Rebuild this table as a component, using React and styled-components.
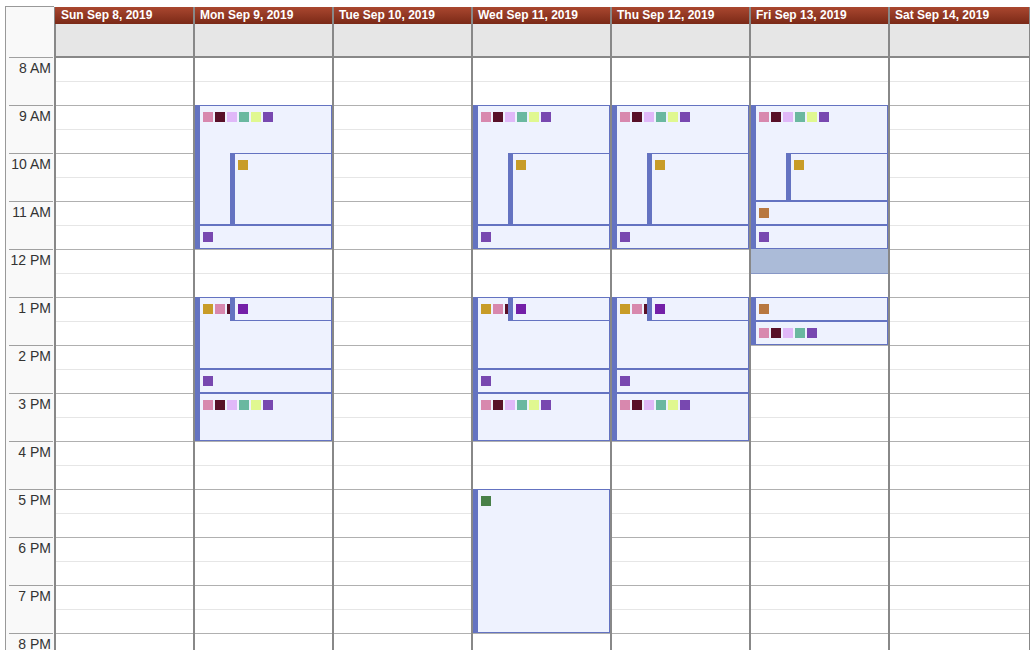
import styled, { createGlobalStyle } from "styled-components"

const GlobalStyle = createGlobalStyle`
  html, body {
    margin: 0;
    padding: 0;
    overflow: hidden;
    background: white;
  }
  body {
    font-family: "Liberation Sans", Arial, sans-serif;
  }
`

const HOUR = 48
const FIRST_HOUR = 8

const c = {
  pink: "#d888ae",
  maroon: "#581028",
  lav: "#e0b8f8",
  teal: "#6ab8a0",
  lime: "#e0f890",
  purple: "#7848b0",
  gold: "#c89c28",
  brown: "#b87840",
  violet: "#7420a8",
  green: "#488048",
}

const full = [c.pink, c.maroon, c.lav, c.teal, c.lime, c.purple]

const morning = [
  { start: 9, end: 11.5, tags: full },
  { start: 10, end: 11.5, tags: [c.gold], indent: true },
  { start: 11.5, end: 12, tags: [c.purple] },
]

const afternoon = [
  { start: 13, end: 14.5, tags: [c.gold, c.pink, c.maroon] },
  { start: 13, end: 13.5, tags: [c.violet], indent: true },
  { start: 14.5, end: 15, tags: [c.purple] },
  { start: 15, end: 16, tags: full },
]

const days = [
  { label: "Sun Sep 8, 2019", events: [] },
  { label: "Mon Sep 9, 2019", events: [...morning, ...afternoon] },
  { label: "Tue Sep 10, 2019", events: [] },
  {
    label: "Wed Sep 11, 2019",
    events: [...morning, ...afternoon, { start: 17, end: 20, tags: [c.green] }],
  },
  { label: "Thu Sep 12, 2019", events: [...morning, ...afternoon] },
  {
    label: "Fri Sep 13, 2019",
    events: [
      { start: 9, end: 11, tags: full },
      { start: 10, end: 11, tags: [c.gold], indent: true },
      { start: 11, end: 11.5, tags: [c.brown] },
      { start: 11.5, end: 12, tags: [c.purple] },
      { start: 13, end: 13.5, tags: [c.brown] },
      { start: 13.5, end: 14, tags: [c.pink, c.maroon, c.lav, c.teal, c.purple] },
    ],
    busy: [{ start: 12, end: 12.5 }],
  },
  { label: "Sat Sep 14, 2019", events: [] },
]

const hours = ["8 AM", "9 AM", "10 AM", "11 AM", "12 PM", "1 PM", "2 PM", "3 PM", "4 PM", "5 PM", "6 PM", "7 PM", "8 PM", "9 PM"]

const Page = styled.div`
  display: flex;
  align-items: flex-start;
  padding: 6px 0 0 5px;
`

const Gutter = styled.div`
  width: 48px;
  flex-shrink: 0;
  background: #f9f9f9;
  border-left: 1px solid #999;
  border-top: 1px solid #999;
`

const Corner = styled.div`
  height: 50px;
`

const HourLabel = styled.div`
  height: ${HOUR}px;
  box-sizing: border-box;
  margin: 0 1px 0 3px;
  border-top: 1px solid #a0a0a0;
  padding: 2px 2px 0 0;
  text-align: right;
  font-size: 14px;
  line-height: 16px;
  color: #333;
  white-space: nowrap;
`

const DayColumn = styled.div`
  width: ${(p) => (p.$last ? 139 : 137)}px;
  flex-shrink: 0;
  margin-top: 1px;
  border-left: 2px solid #888;
  border-right: ${(p) => (p.$last ? "2px solid #888" : "none")};
`

const DayHeader = styled.div`
  height: 17px;
  margin-left: ${(p) => (p.$first ? "-1px" : "0")};
  padding-left: ${(p) => (p.$first ? "6px" : "5px")};
  background: linear-gradient(#aa472f, #7a2917);
  color: white;
  font-weight: bold;
  font-size: 12px;
  line-height: 17px;
  white-space: nowrap;
  overflow: hidden;
`

const AllDay = styled.div`
  height: 32px;
  background: #e6e6e6;
  border-bottom: 2px solid #888;
`

const DayBody = styled.div`
  position: relative;
`

const Slot = styled.div`
  height: 24px;
  box-sizing: border-box;
  border-bottom: 1px solid ${(p) => (p.$hour ? "#b0b0b0" : "#e6e6e6")};
`

const Event = styled.div`
  position: absolute;
  right: 0;
  left: ${(p) => (p.$indent ? "35px" : "0")};
  box-sizing: border-box;
  background: #eef2fe;
  border: 1px solid #6473c1;
  border-left-width: 5px;
  padding: 6px 0 0 3px;
  display: flex;
  align-items: flex-start;
  gap: 2px;
  overflow: hidden;
`

const Tag = styled.span`
  width: 10px;
  height: 10px;
  flex-shrink: 0;
  background: ${(p) => p.$color};
`

const Busy = styled.div`
  position: absolute;
  left: 0;
  right: 0;
  box-sizing: border-box;
  background: #abbbd8;
  border-bottom: 1px solid #8797c6;
`

const place = (start, end, extra = 0) => ({
  top: (start - FIRST_HOUR) * HOUR - 1,
  height: (end - start) * HOUR + extra,
})

export default function App() {
  const slots = Array.from({ length: hours.length * 2 })

  return (
    <>
      <GlobalStyle />
      <Page>
        <Gutter>
          <Corner />
          {hours.map((h) => (
            <HourLabel key={h}>{h}</HourLabel>
          ))}
        </Gutter>

        {days.map((day, i) => (
          <DayColumn key={day.label} $last={i === days.length - 1}>
            <DayHeader $first={i === 0}>{day.label}</DayHeader>
            <AllDay />
            <DayBody>
              {slots.map((_, s) => (
                <Slot key={s} $hour={s % 2 === 1} />
              ))}
              {(day.busy || []).map((b, k) => (
                <Busy key={"b" + k} style={place(b.start, b.end, 1)} />
              ))}
              {day.events.map((ev, k) => (
                <Event key={k} $indent={ev.indent} style={place(ev.start, ev.end)}>
                  {ev.tags.map((t, n) => (
                    <Tag key={n} $color={t} />
                  ))}
                </Event>
              ))}
            </DayBody>
          </DayColumn>
        ))}
      </Page>
    </>
  )
}
